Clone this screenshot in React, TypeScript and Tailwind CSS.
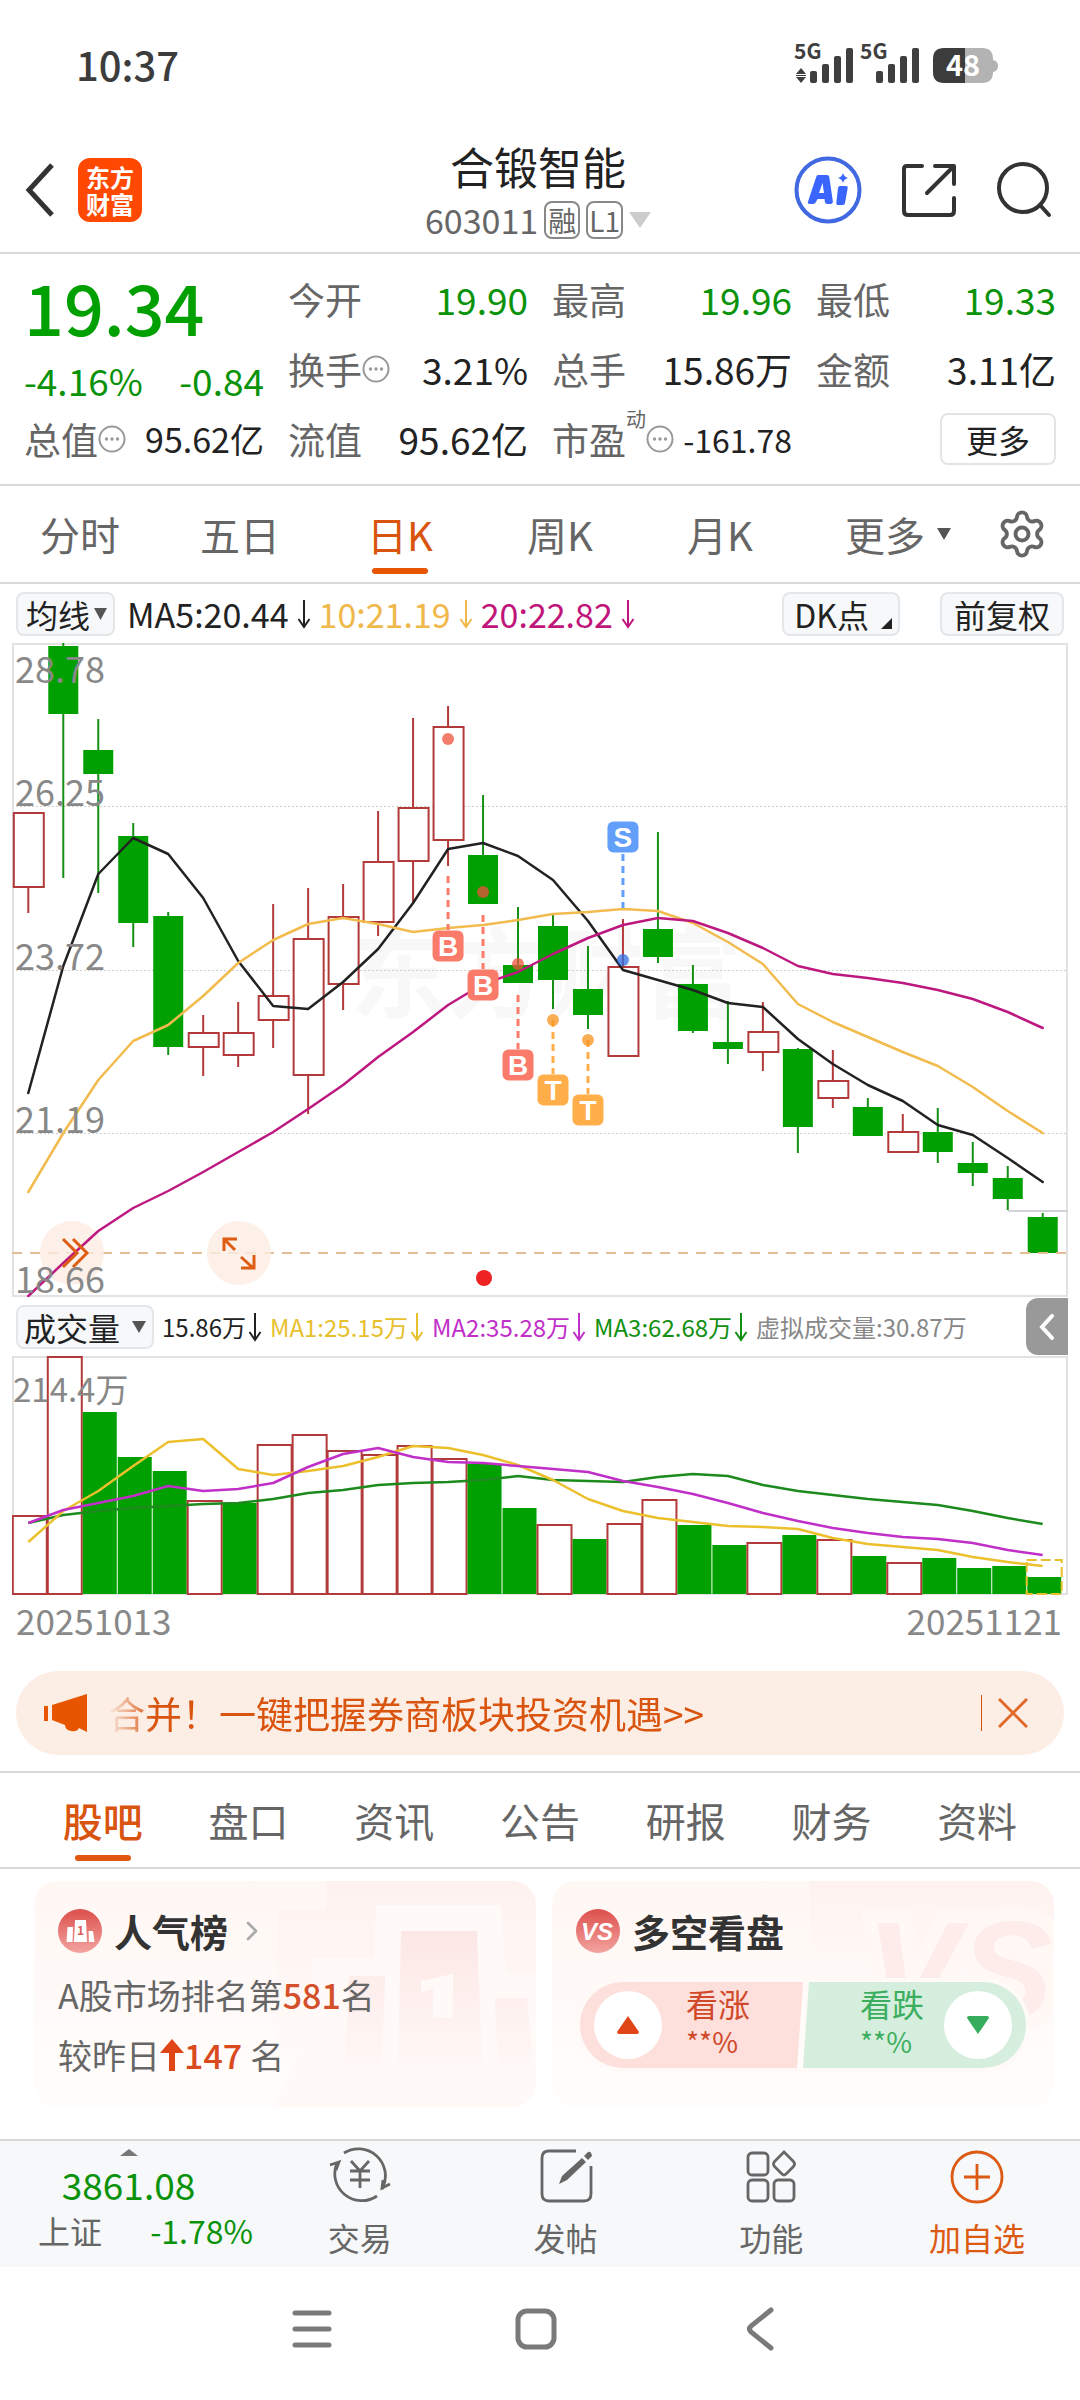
import type { ReactNode } from "react";
import { ChevronRight, Settings } from "lucide-react";
import clsx from "clsx";

const RED = "#b33a3a";
const GREEN = "#00a000";
const STEP = 34.98;
const cx = (i: number) => 16.3 + STEP * i;

// [high, body top, body bottom, low, up?] in chart units, top = 28.78
const candles: [number, number, number, number, boolean][] = [
  [169, 169, 244, 270, true],
  [0, 3, 71, 235, false],
  [76, 107, 131, 250, false],
  [180, 193, 280, 304, false],
  [269, 273, 404, 412, false],
  [372, 389, 404, 433, true],
  [359, 389, 412, 424, true],
  [261, 352, 377, 405, true],
  [245, 295, 432, 471, true],
  [241, 273, 341, 367, true],
  [168, 218, 279, 293, true],
  [75, 164, 218, 260, true],
  [63, 83, 197, 223, true],
  [152, 212, 261, 261, false],
  [264, 322, 340, 340, false],
  [272, 283, 337, 366, false],
  [303, 346, 372, 386, false],
  [276, 323, 413, 413, true],
  [189, 286, 314, 320, false],
  [322, 341, 388, 390, false],
  [358, 399, 406, 421, false],
  [359, 388, 409, 428, true],
  [405, 406, 484, 510, false],
  [407, 437, 455, 465, true],
  [455, 464, 493, 493, false],
  [471, 488, 509, 509, true],
  [465, 489, 509, 520, false],
  [499, 520, 530, 543, false],
  [523, 535, 556, 567, false],
  [570, 574, 610, 610, false],
];

const ma5 = [450, 323, 231, 195, 211, 255, 318, 363, 366, 339, 306, 260, 206, 200, 213, 237, 278, 327, 337, 347, 360, 364, 396, 421, 442, 458, 482, 492, 515, 539];
const ma10 = [549, 490, 437, 398, 382, 353, 320, 297, 281, 275, 281, 289, 285, 282, 277, 271, 269, 266, 268, 280, 299, 321, 361, 379, 394, 409, 423, 444, 468, 490];
const ma20 = [653, 620, 588, 565, 548, 529, 509, 489, 466, 442, 414, 389, 362, 341, 329, 311, 295, 282, 275, 278, 290, 305, 323, 331, 335, 340, 347, 356, 369, 385];

const volumes = [159, 0, 56, 101, 115, 144, 147, 88, 78, 94, 98, 89, 102, 108, 152, 168, 183, 167, 143, 169, 189, 186, 179, 183, 200, 206, 202, 212, 210, 221];
const volUp = [0, 1, 5, 7, 8, 9, 10, 11, 12, 15, 17, 18, 21, 23, 25];
const vma1 = [186, 155, 135, 110, 86, 83, 113, 119, 115, 110, 101, 90, 92, 99, 109, 124, 143, 155, 162, 166, 170, 171, 173, 182, 188, 191, 194, 201, 206, 210];
const vma2 = [167, 154, 147, 140, 130, 135, 133, 127, 111, 98, 92, 101, 106, 107, 110, 113, 116, 125, 131, 138, 147, 157, 165, 172, 177, 181, 183, 187, 194, 199];
const vma3 = [167, 159, 155, 152, 150, 148, 147, 143, 137, 134, 129, 127, 126, 124, 120, 124, 125, 126, 121, 118, 120, 129, 135, 139, 143, 146, 149, 155, 162, 168];

const line = (ys: number[]) => ys.map((y, i) => `${cx(i).toFixed(1)},${y}`).join(" ");

// trade marks: candle index, letter, badge centre, dot, dashed from/to
const marks = [
  { i: 12, t: "B", y: 303, dot: 96, from: 233, to: 287, c: "#fb7b6b" },
  { i: 13, t: "B", y: 342, dot: 249, from: 272, to: 326, c: "#fb7b6b" },
  { i: 14, t: "B", y: 422, dot: 321, from: 352, to: 406, c: "#fb7b6b" },
  { i: 15, t: "T", y: 447, dot: 377, from: 377, to: 431, c: "#ffae4a" },
  { i: 16, t: "T", y: 467, dot: 397, from: 397, to: 451, c: "#ffae4a" },
  { i: 17, t: "S", y: 194, dot: 317, from: 211, to: 265, c: "#629ffa" },
];

const dotColor: Record<string, string> = { B: "#f0523c", T: "#f7931e", S: "#2f6fe6" };

function DownArrow() {
  return (
    <svg width="14" height="30" viewBox="0 0 14 30" fill="none" stroke="currentColor" strokeWidth="2">
      <path d="M7 1v27M1.500 20 7 28l5.500-8" />
    </svg>
  );
}

function Dots() {
  return (
    <svg width="28" height="28" viewBox="0 0 28 28" className="shrink-0 text-[#999]">
      <circle cx="14" cy="14" r="12.500" fill="none" stroke="currentColor" strokeWidth="2" />
      <circle cx="8.500" cy="14" r="1.700" fill="currentColor" />
      <circle cx="14" cy="14" r="1.700" fill="currentColor" />
      <circle cx="19.500" cy="14" r="1.700" fill="currentColor" />
    </svg>
  );
}

function Bars() {
  return (
    <>
      <rect x="0" y="23" width="7" height="12" rx="2" />
      <rect x="12" y="16" width="7" height="19" rx="2" />
      <rect x="24" y="8" width="7" height="27" rx="2" />
      <rect x="36" y="0" width="7" height="35" rx="2" />
    </>
  );
}

function StatusBar() {
  return (
    <div className="flex h-27 items-center justify-between pt-5 pl-[76px] pr-20 text-[#3c3c3c]">
      <span className="text-[40px] leading-none font-medium">10:37</span>
      <svg width="206" height="60" viewBox="0 -8 206 60" fill="#3f3f3f">
        <text x="0" y="17" fontSize="21" fontWeight="700">5G</text>
        <path d="M7 26l5 6H2zM7 41l5-6H2zM2 33h10v1H2z" />
        <g transform="translate(16 6)"><Bars /></g>
        <text x="66" y="17" fontSize="21" fontWeight="700">5G</text>
        <g transform="translate(82 6)"><Bars /></g>
        <path d="M152 6h36q11 0 11 11v1q5 1 5 6t-5 6q0 11-11 11h-36z" fill="#b3b3b3" />
        <path d="M171 6h-21q-11 0-11 11v13q0 11 11 11h21z" fill="#3c3c3c" />
        <text x="152" y="34" fontSize="29" fontWeight="700" fill="#fff">48</text>
      </svg>
    </div>
  );
}

function Header() {
  return (
    <header className="grid h-[146px] grid-cols-[1fr_auto_1fr] items-center border-b-2 border-[#d9d9d9] pt-5 pl-6 pr-7">
      <div className="flex items-center gap-6">
        <button aria-label="返回">
          <svg width="30" height="54" viewBox="0 0 30 54" fill="none" stroke="#333" strokeWidth="5">
            <path d="M28 2 5 27l23 25" />
          </svg>
        </button>
        <span className="grid size-16 content-center justify-center rounded-xl bg-[#ff4800] text-[24px] leading-[27px] font-bold text-white">
          <span>东方</span>
          <span>财富</span>
        </span>
      </div>
      <div className="flex flex-col items-center gap-2">
        <h1 className="text-[44px] leading-[52px] text-[#222]">合锻智能</h1>
        <div className="flex items-center gap-1.5 text-[#666]">
          <span className="text-[34px] leading-10">603011</span>
          <span className="rounded-lg border-2 border-[#888] px-0.5 text-[28px] leading-[34px]">融</span>
          <span className="rounded-lg border-2 border-[#888] px-px text-[28px] leading-[34px]">L1</span>
          <svg width="22" height="16" viewBox="0 0 22 16" fill="#ccc"><path d="M0 0h22L11 16z" /></svg>
        </div>
      </div>
      <div className="flex items-center justify-end gap-10">
        <button aria-label="Ai">
          <svg width="68" height="68" viewBox="0 0 68 68">
            <circle cx="34" cy="34" r="31.500" fill="none" stroke="#4169e1" strokeWidth="4" />
            <path
              fill="#3a66ff"
              fillRule="evenodd"
              d="M24 19h9q2 0 2.300 2l3.500 24q.3 3-2.500 3h-3q-2 0-2.400-2l-.4-3h-7l-1.500 3q-1 2-3 2h-3q-3 0-1.800-3l8-24q.6-2 1.800-2zM28.500 27l-3.500 10h5z"
            />
            <path fill="#3a66ff" d="M46 30h6q2 0 1.700 2L51 47q-.4 2-2 2h-5q-2 0-1.700-2L44 32q.3-2 2-2zM49 17q1 4 5 5-4 1-5 5-1-4-5-5 4-1 5-5z" />
          </svg>
        </button>
        <button aria-label="分享">
          <svg width="54" height="54" viewBox="0 0 54 54" fill="none" stroke="#333" strokeWidth="4" strokeLinecap="round" strokeLinejoin="round">
            <path d="M20 3H5Q2 3 2 6v42q0 4 4 4h42q4 0 4-4V35M33 3h19v18M51 4 25 30" />
          </svg>
        </button>
        <button aria-label="搜索">
          <svg width="56" height="56" viewBox="0 0 56 56" fill="none" stroke="#333" strokeWidth="4" strokeLinecap="round">
            <circle cx="27" cy="26" r="24" />
            <path d="m44 43 9 10" />
          </svg>
        </button>
      </div>
    </header>
  );
}

function Stat({ label, children, size = "text-[37px]", green }: { label: ReactNode; children: ReactNode; size?: string; green?: boolean }) {
  return (
    <div className="flex items-center justify-between text-[37px] leading-[48px] whitespace-nowrap text-[#666]">
      <span className="flex items-center">{label}</span>
      <span className={clsx(size, green ? "text-[#0a930a]" : "text-[#222]")}>{children}</span>
    </div>
  );
}

function Quote() {
  return (
    <section className="grid auto-rows-[70px] grid-cols-4 gap-x-6 border-b-2 border-[#d9d9d9] px-6 py-2.5">
      <div className="row-span-2 flex flex-col justify-between pb-1 text-[#0a930a]">
        <span className="text-[70px] leading-[84px] font-medium text-[#00a000]">19.34</span>
        <span className="flex justify-between text-[37px] leading-[40px]">
          <span>-4.16%</span>
          <span>-0.84</span>
        </span>
      </div>
      <Stat label="今开" green>19.90</Stat>
      <Stat label="最高" green>19.96</Stat>
      <Stat label="最低" green>19.33</Stat>
      <Stat label={<>换手<Dots /></>}>3.21%</Stat>
      <Stat label="总手">15.86万</Stat>
      <Stat label="金额">3.11亿</Stat>
      <Stat label={<>总值<Dots /></>} size="text-[34px]">95.62亿</Stat>
      <Stat label="流值">95.62亿</Stat>
      <Stat label={<>市盈<span className="-mt-2 self-start text-[20px] leading-[24px]">动</span><Dots /></>} size="text-[32px]">-161.78</Stat>
      <button className="self-center justify-self-end rounded-lg border-2 border-[#e4e4e4] px-6 text-[32px] leading-[48px] text-[#222]">更多</button>
    </section>
  );
}

function PeriodTabs() {
  return (
    <nav className="grid h-[98px] grid-cols-[repeat(5,160fr)_196fr_84fr] border-b-2 border-[#d9d9d9] text-[40px] text-[#666]">
      {["分时", "五日", "日K", "周K", "月K"].map((t) => (
        <button key={t} className={clsx("relative", t === "日K" && "text-[#d9540e]")}>
          {t}
          {t === "日K" && <span className="absolute bottom-2 left-1/2 h-1.5 w-14 -translate-x-1/2 rounded-full bg-[#e85500]" />}
        </button>
      ))}
      <button className="flex items-center justify-center gap-3">
        更多
        <svg width="14" height="12" viewBox="0 0 14 12" fill="#555"><path d="M0 0h14L7 12z" /></svg>
      </button>
      <button aria-label="设置" className="flex items-center">
        <Settings size={52} strokeWidth={1.8} />
      </button>
    </nav>
  );
}

function Chip({ children, className }: { children: ReactNode; className?: string }) {
  return (
    <button className={clsx("flex items-center rounded-lg border-2 border-[#e3e7ea] bg-[#f6f8fa] text-[32px] leading-[40px] text-[#222]", className)}>
      {children}
    </button>
  );
}

function AverageBar() {
  return (
    <div className="flex h-[59px] items-center px-4 text-[34px] leading-none">
      <Chip className="gap-1 pl-2 pr-1.5">
        均线
        <svg width="13" height="12" viewBox="0 0 13 12" fill="#555"><path d="M0 0h13L6.500 12z" /></svg>
      </Chip>
      <div className="ml-3 flex items-center gap-2">
        <span className="flex items-center gap-2 text-[#222]">MA5:20.44<DownArrow /></span>
        <span className="flex items-center gap-2 text-[#f0b84a]">10:21.19<DownArrow /></span>
        <span className="flex items-center gap-2 text-[#c0157a]">20:22.82<DownArrow /></span>
      </div>
      <Chip className="ml-auto gap-3 pl-2.5 pr-1.5">
        DK点
        <svg width="11" height="11" viewBox="0 0 11 11" fill="#222" className="mt-5"><path d="M11 0v11H0z" /></svg>
      </Chip>
      <Chip className="ml-10 px-3">前复权</Chip>
    </div>
  );
}

function PriceChart() {
  return (
    <div className="relative mx-3">
      <svg viewBox="0 0 1056 654" className="block w-full">
        <g fontSize="98" fontWeight="700" fill="#f8f8f8">
          <text x="338" y="367">东方财富</text>
        </g>
        <g stroke="#cfcfcf" strokeDasharray="2 2">
          <path d="M0 163.500h1056M0 327.500h1056M0 490.500h1056" />
        </g>
        <rect x="1" y="1" width="1054" height="652" fill="none" stroke="#e2e2e2" strokeWidth="2" />
        <path d={`M${cx(28)} 568H1056`} stroke="#d0d4d8" strokeWidth="2" />
        {candles.map(([h, t, b, l, up], i) => (
          <g key={i} stroke={up ? RED : "#159015"} strokeWidth="2">
            <path d={`M${cx(i)} ${h}V${t}M${cx(i)} ${b}V${l}`} />
            {up ? (
              <rect x={cx(i) - 14.5} y={t + 1} width="30" height={b - t - 1} fill="#fff" />
            ) : (
              <rect x={cx(i) - 15} y={t} width="30" height={b - t} fill={GREEN} stroke="none" />
            )}
          </g>
        ))}
        <path d="M0 610h1056" stroke="#e3bd94" strokeWidth="2" strokeDasharray="10 8" />
        <circle cx="60" cy="610" r="32" fill="#fdece2" fillOpacity=".8" />
        <circle cx="227" cy="610" r="32" fill="#fdece2" fillOpacity=".8" />
        <g fill="none" strokeWidth="2.500" strokeLinejoin="round" strokeLinecap="round">
          <polyline points={line(ma5)} stroke="#222" />
          <polyline points={line(ma10)} stroke="#f2bb4e" />
          <polyline points={line(ma20)} stroke="#bd1880" />
        </g>
        <g fill="none" stroke="#de5d12" strokeWidth="3">
          <path d="m51 596 14 14-14 14M61 596l14 14-14 14" />
          <path d="m223 607-10-10M212 608v-12h13M229 614l11 10M229 625h13v-13" />
        </g>
        {marks.map((m) => (
          <g key={m.i}>
            <path d={`M${cx(m.i)} ${m.from}V${m.to}`} stroke={m.c} strokeWidth="3" strokeDasharray="7 5" />
            <circle cx={cx(m.i)} cy={m.dot} r="6" fill={dotColor[m.t]} fillOpacity=".75" />
            <rect x={cx(m.i) - 15.5} y={m.y - 15.5} width="31" height="31" rx="6" fill={m.c} />
            <text x={cx(m.i)} y={m.y + 10} fontSize="28" fontWeight="700" textAnchor="middle" fill="#fff" className="font-['Liberation_Sans']">
              {m.t}
            </text>
          </g>
        ))}
        <circle cx="472" cy="635" r="8" fill="#ee2222" />
        <g fontSize="36" fill="#888">
          <text x="3" y="40">28.78</text>
          <text x="3" y="163">26.25</text>
          <text x="3" y="327">23.72</text>
          <text x="3" y="490">21.19</text>
          <text x="3" y="650">18.66</text>
        </g>
      </svg>
      <button aria-label="展开" className="absolute bottom-3 left-7 size-16 rounded-full" />
      <button aria-label="全屏" className="absolute bottom-3 left-48 size-16 rounded-full" />
    </div>
  );
}

function VolumeBar() {
  return (
    <div className="flex h-[59px] items-center pl-4 pr-3 text-[24px] leading-none whitespace-nowrap">
      <Chip className="gap-3 px-1.5">
        成交量
        <svg width="14" height="12" viewBox="0 0 14 12" fill="#555"><path d="M0 0h14L7 12z" /></svg>
      </Chip>
      <div className="ml-2 flex items-center gap-2">
        <span className="flex items-center gap-0.5 text-[#222]">15.86万<DownArrow /></span>
        <span className="flex items-center gap-0.5 text-[#e8c02e]">MA1:25.15万<DownArrow /></span>
        <span className="flex items-center gap-0.5 text-[#c02fc8]">MA2:35.28万<DownArrow /></span>
        <span className="flex items-center gap-0.5 text-[#129012]">MA3:62.68万<DownArrow /></span>
        <span className="text-[#888]">虚拟成交量:30.87万</span>
      </div>
      <button aria-label="收起" className="ml-auto flex h-[57px] w-[42px] items-center justify-center rounded-l-xl bg-[#999]">
        <svg width="16" height="26" viewBox="0 0 16 26" fill="none" stroke="#fff" strokeWidth="4" strokeLinecap="round"><path d="M13 2 3 13l10 11" /></svg>
      </button>
    </div>
  );
}

function VolumeChart() {
  return (
    <div className="mx-3">
      <svg viewBox="0 0 1056 240" className="block w-full">
        <rect x="1" y="1" width="1054" height="237" fill="none" stroke="#e2e2e2" strokeWidth="2" />
        {volumes.map((y, i) =>
          volUp.includes(i) ? (
            <rect key={i} x={cx(i) - 15.5} y={y + 1} width="34" height={237 - y} fill="#fff" stroke={RED} strokeWidth="2" />
          ) : (
            <rect key={i} x={cx(i) - 15.5} y={y} width="34" height={238 - y} fill={GREEN} />
          ),
        )}
        <rect x={cx(29) - 16} y="204" width="35" height="34" fill="none" stroke="#e8c02e" strokeWidth="2" strokeDasharray="10 4" />
        <g fill="none" strokeWidth="2.500" strokeLinejoin="round">
          <polyline points={line(vma3)} stroke="#1c8a1c" />
          <polyline points={line(vma1)} stroke="#ecc02c" />
          <polyline points={line(vma2)} stroke="#c02fc8" />
        </g>
        <text x="1" y="46" fontSize="33" fill="#888">214.4万</text>
      </svg>
      <div className="flex justify-between pl-1 pr-1.5 text-[35px] leading-[48px] text-[#888]">
        <span>20251013</span>
        <span>20251121</span>
      </div>
    </div>
  );
}

function Banner() {
  return (
    <div className="mx-4 mt-[27px] flex h-[84px] items-center rounded-full bg-[#fceee5] pl-7 pr-9 text-[37px] text-[#d9540e]">
      <svg width="44" height="38" viewBox="0 0 44 38" fill="#e85500">
        <path d="M0 12h4v15H0zM8 11 43 0v38l-8-4q-2 4-8 3-6-1-6-6l-13-5z" />
      </svg>
      <span className="ml-5 flex-1 leading-[48px] whitespace-nowrap [mask-image:linear-gradient(to_right,transparent,black_46px)]">
        合并！一键把握券商板块投资机遇&gt;&gt;
      </span>
      <span className="h-9 w-px bg-[#d9540e]" />
      <button aria-label="关闭" className="ml-4">
        <svg width="30" height="30" viewBox="0 0 30 30" stroke="#e06a2a" strokeWidth="3"><path d="m1 1 28 28M29 1 1 29" /></svg>
      </button>
    </div>
  );
}

function InfoTabs() {
  return (
    <nav className="mt-4 grid h-[98px] grid-cols-7 border-y-2 border-[#d9d9d9] px-[30px] text-[40px] text-[#666]">
      {["股吧", "盘口", "资讯", "公告", "研报", "财务", "资料"].map((t, i) => (
        <button key={t} className={clsx("relative", i === 0 && "font-medium text-[#d9540e]")}>
          {t}
          {i === 0 && <span className="absolute bottom-1.5 left-1/2 h-1.5 w-14 -translate-x-1/2 rounded-full bg-[#e0570f]" />}
        </button>
      ))}
    </nav>
  );
}

function RankCard() {
  return (
    <section className="relative h-[226px] overflow-hidden rounded-3xl bg-gradient-to-b from-[#fff7f4] to-[#fffdfc] px-6 pt-7">
      <svg viewBox="0 0 502 226" className="absolute inset-0 size-full">
        <defs>
          <linearGradient id="podium" x1="0" y1="0" x2="0" y2="1">
            <stop offset="0" stopColor="#fce7e5" />
            <stop offset="1" stopColor="#fff8f6" />
          </linearGradient>
          <linearGradient id="halo" x1="0" y1="0" x2="0" y2="1">
            <stop offset="0" stopColor="#fef2ef" />
            <stop offset="1" stopColor="#fffbf9" />
          </linearGradient>
        </defs>
        <path d="M244 29h47l2-29h209v180H240z" fill="url(#halo)" />
        <path d="M279 77h61l2-53h125l5 69h30v133H240l32-66z" fill="#fff9f7" />
        <path d="M367 50h76l5 134h-84zM315 95h36l-3 89h-37zM461 117h32l6 67h-35z" fill="url(#podium)" />
        <path d="M387 100l32-7v44h-20v-29l-12 4z" fill="#fff9f7" />
      </svg>
      <div className="relative">
        <h2 className="flex h-11 items-center gap-3 text-[38px] leading-none font-bold text-[#333]">
          <svg width="44" height="44" viewBox="0 0 44 44">
            <defs>
              <linearGradient id="badge" x1="0" y1="0" x2="0" y2="1">
                <stop offset="0" stopColor="#dc4f4c" />
                <stop offset="1" stopColor="#f3a49f" />
              </linearGradient>
            </defs>
            <circle cx="22" cy="22" r="22" fill="url(#badge)" />
            <path d="M17 11h11l1 22H16zM9.500 18H15l-.5 15H8.500zM30.500 22H35l1.500 11H31z" fill="#fff" />
            <text x="22.500" y="26" fontSize="12" fontWeight="700" textAnchor="middle" fill="#dc5b57">1</text>
          </svg>
          人气榜
          <ChevronRight size={32} strokeWidth={2} className="-ml-1 text-[#aaa]" />
        </h2>
        <p className="mt-5 text-[34px] leading-[44px] text-[#666]">
          A股市场排名第<span className="font-medium text-[#d4502a]">581</span>名
        </p>
        <p className="mt-4 flex items-center text-[34px] leading-[44px] text-[#666]">
          较昨日
          <svg width="24" height="32" viewBox="0 0 24 32" fill="#e04518"><path d="M12 0 24 14h-9v18H9V14H0z" /></svg>
          <span className="font-medium text-[#d94a1e]">147</span>
          <span className="ml-2">名</span>
        </p>
      </div>
    </section>
  );
}

function VoteCard() {
  return (
    <section className="relative h-[226px] overflow-hidden rounded-3xl bg-gradient-to-b from-[#fff7f4] to-[#fffdfc] px-6 pt-7">
      <svg viewBox="0 0 502 226" className="absolute inset-0 size-full">
        <path d="M257 0h245v110H262z" fill="url(#halo)" />
        <text x="314" y="138" fontSize="140" fontWeight="700" fontStyle="italic" fill="#fdecea" stroke="#fff8f5" strokeWidth="28" paintOrder="stroke" className="font-['Liberation_Sans']">
          VS
        </text>
      </svg>
      <div className="relative">
        <h2 className="flex h-11 items-center gap-3 text-[38px] leading-none font-bold text-[#333]">
          <svg width="44" height="44" viewBox="0 0 44 44">
            <circle cx="22" cy="22" r="22" fill="url(#badge)" />
            <text x="21" y="31" fontSize="24" fontWeight="700" fontStyle="italic" textAnchor="middle" fill="#fff" className="font-['Liberation_Sans']">VS</text>
          </svg>
          多空看盘
        </h2>
        <div className="mx-1 mt-[29px] flex h-[86px] overflow-hidden rounded-full ring-4 ring-[#fffaf8]">
          <button className="flex flex-1 items-center gap-6 bg-[#fddfdc] pl-3.5 text-[#d0492a] [clip-path:polygon(0_0,100%_0,calc(100%_-_6px)_100%,0_100%)]">
            <span className="flex size-[68px] items-center justify-center rounded-full bg-white">
              <svg width="22" height="18" viewBox="0 0 22 18" fill="#e04518"><path d="M11 0 22 16q0 2-2 2H2q-2 0-2-2z" /></svg>
            </span>
            <span className="flex flex-col pb-2 text-left text-[32px] leading-[40px]">
              看涨
              <span className="text-[28px] leading-[36px]">**%</span>
            </span>
          </button>
          <button className="flex flex-1 items-center justify-end gap-5 bg-[#d6eedd] pr-3.5 text-[#3cae60] [clip-path:polygon(6px_0,100%_0,100%_100%,0_100%)]">
            <span className="flex flex-col pb-2 text-left text-[32px] leading-[40px]">
              看跌
              <span className="text-[28px] leading-[36px]">**%</span>
            </span>
            <span className="flex size-[68px] items-center justify-center rounded-full bg-white">
              <svg width="22" height="18" viewBox="0 0 22 18" fill="#36ad5c"><path d="M11 18 0 2q0-2 2-2h18q2 0 2 2z" /></svg>
            </span>
          </button>
        </div>
      </div>
    </section>
  );
}

const actions = [
  {
    label: "交易",
    icon: (
      <>
        <path d="M15 6A27 27 0 0 1 54 40l-1 2M48 49A27 27 0 0 1 8 16" />
        <path d="m1 18 9-3-3 8M61 37l-8 4 1-8M22 14l9 10 9-10M21 24h20M21 33h20M31 24v17" />
      </>
    ),
  },
  {
    label: "发帖",
    icon: (
      <>
        <path d="M41 4H14q-7 0-7 7v36q0 7 7 7h35q7 0 7-7V19" />
        <path d="m24 37 3-8 20-18 4 4-19 18zM49 9l4-4q2-1 3 1t1 3l-4 4z" fill="currentColor" stroke="none" />
      </>
    ),
  },
  {
    label: "功能",
    icon: (
      <>
        <rect x="8" y="6" width="20" height="22" rx="4" />
        <rect x="8" y="33" width="20" height="21" rx="4" />
        <rect x="34" y="33" width="20" height="21" rx="4" />
        <path d="m44 5 9 9q3 3 0 6l-7 7q-2 2-4 0l-7-7q-3-3 0-6z" />
      </>
    ),
  },
  {
    label: "加自选",
    icon: (
      <>
        <circle cx="31" cy="30" r="25" />
        <path d="M31 17v26M18 30h26" />
      </>
    ),
  },
];

function BottomBar() {
  return (
    <footer className="mt-8 flex h-32 border-t-2 border-[#d9d9d9] bg-[#f6f8fa] text-[#666]">
      <button className="flex w-[257px] flex-col items-center pt-2 text-[#0a930a]">
        <svg width="18" height="7" viewBox="0 0 18 7" fill="#777"><path d="M9 0l9 7H0z" /></svg>
        <span className="mt-1.5 text-[37px] leading-[44px]">3861.08</span>
        <span className="mt-1 flex w-full justify-between pl-[38px] pr-1 text-[32px] leading-[40px]">
          <span className="text-[#666]">上证</span>
          <span>-1.78%</span>
        </span>
      </button>
      {actions.map((a, i) => (
        <button key={a.label} className={clsx("flex flex-1 flex-col items-center pt-1.5", i === 3 && "text-[#dd5a14]")}>
          <svg width="62" height="60" viewBox="0 0 62 60" fill="none" stroke="currentColor" strokeWidth="2.800">{a.icon}</svg>
          <span className="mt-2 text-[32px] leading-[44px]">{a.label}</span>
        </button>
      ))}
    </footer>
  );
}

function SystemNav() {
  return (
    <nav className="mx-auto grid h-[132px] w-[63%] grid-cols-3 place-items-center pr-2 pb-2">
      <button aria-label="菜单">
        <svg width="42" height="42" viewBox="0 0 42 42" stroke="#7a7a7a" strokeWidth="5" strokeLinecap="round"><path d="M4 5h34M4 21h34M4 37h34" /></svg>
      </button>
      <button aria-label="主页">
        <svg width="42" height="42" viewBox="0 0 42 42" fill="none" stroke="#7a7a7a" strokeWidth="5"><rect x="3" y="3" width="36" height="36" rx="9" /></svg>
      </button>
      <button aria-label="后退">
        <svg width="28" height="44" viewBox="0 0 28 44" fill="none" stroke="#7a7a7a" strokeWidth="5" strokeLinecap="round"><path d="M25 3 5 19q-3 3 0 6l20 16" /></svg>
      </button>
    </nav>
  );
}

export default function App() {
  return (
    <main className="w-full bg-white font-['Noto_Sans_CJK_SC','Noto_Sans',sans-serif]">
      <StatusBar />
      <Header />
      <Quote />
      <PeriodTabs />
      <AverageBar />
      <PriceChart />
      <VolumeBar />
      <VolumeChart />
      <Banner />
      <InfoTabs />
      <div className="mt-3 grid grid-cols-2 gap-4 pr-[26px] pl-[34px]">
        <RankCard />
        <VoteCard />
      </div>
      <BottomBar />
      <SystemNav />
    </main>
  );
}
